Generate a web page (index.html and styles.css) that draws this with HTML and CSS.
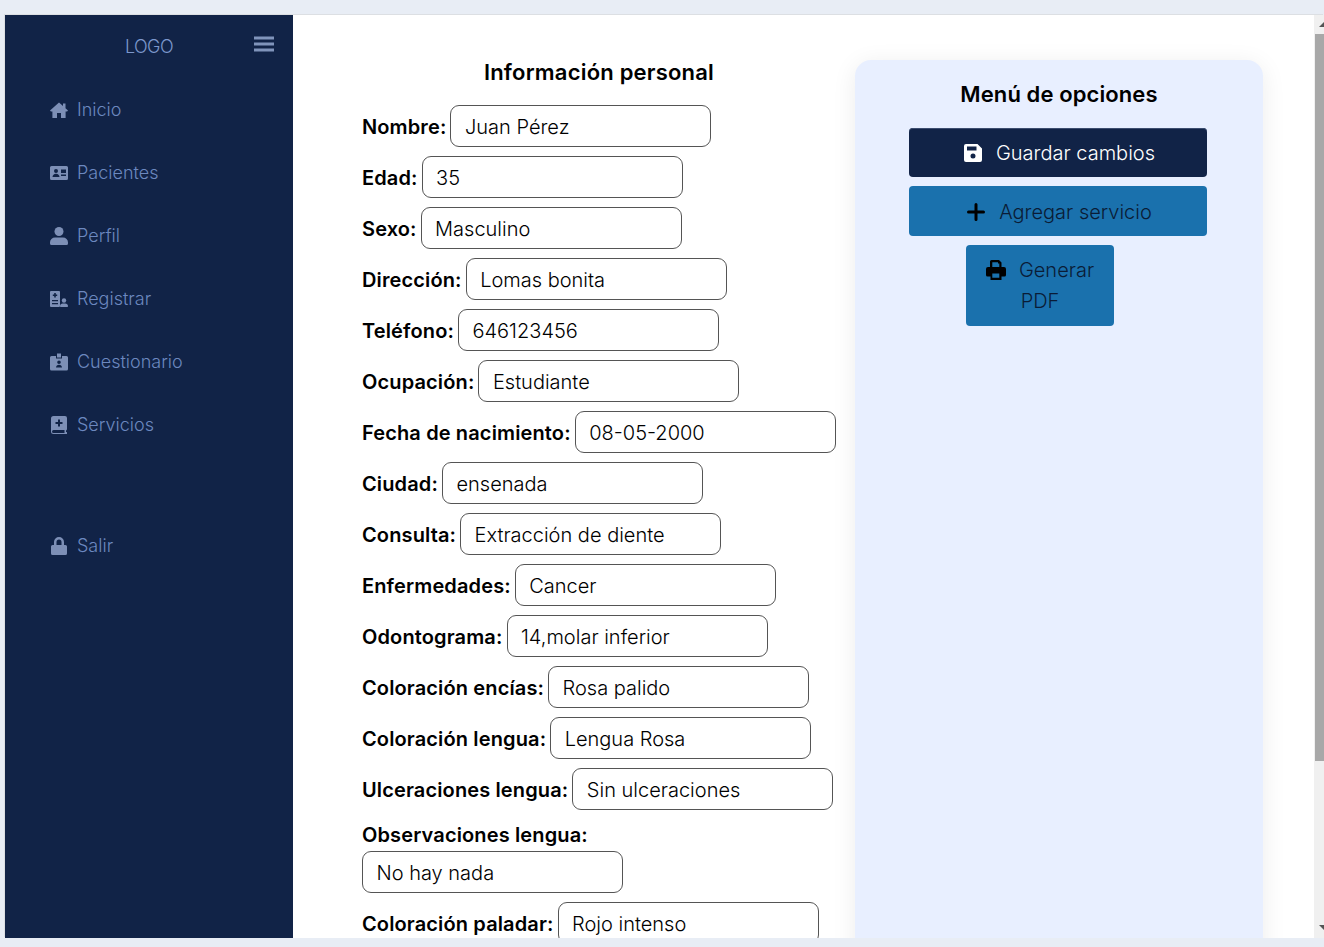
FILE: index.html
```html
<!DOCTYPE html>
<html lang="es">
<head>
<meta charset="utf-8">
<title>Información personal</title>
<link rel="stylesheet" href="styles.css">
</head>
<body>
<div class="app">
  <aside class="sidebar">
    <div class="brand">
      <span class="logo">LOGO</span>
      <svg class="burger" viewBox="0 0 20 18"><path d="M0 1.500h20v3H0zM0 7.500h20v3H0zM0 13.500h20v3H0z"/></svg>
    </div>
    <nav class="nav">
      <a class="nav-item"><svg class="nav-icon" viewBox="0 0 18 16"><path d="M9 .5 13 4V1.500h2.500V6.200L18 8.400l-.9 1.100H15.600V16H11v-5H7v5H2.400V9.500H.9L0 8.400z"/></svg><span>Inicio</span></a>
      <a class="nav-item"><svg class="nav-icon" viewBox="0 0 18 14"><path fill-rule="evenodd" d="M1.500 0h15A1.500 1.500 0 0 1 18 1.500v11a1.500 1.500 0 0 1-1.500 1.500h-15A1.500 1.500 0 0 1 0 12.500v-11A1.500 1.500 0 0 1 1.500 0zM6 3a2 2 0 1 0 0 4 2 2 0 0 0 0-4zM2.500 11h7c0-2-1.500-3.300-3.500-3.300S2.500 9 2.500 11zM11 3.500V7h5V3.500zM11 8.500V10h5V8.500z"/></svg><span>Pacientes</span></a>
      <a class="nav-item"><svg class="nav-icon" viewBox="0 0 18 18"><circle cx="9" cy="4.500" r="4.500"/><path d="M5 10.500h8a5 5 0 0 1 5 5V16.500a1.500 1.500 0 0 1-1.500 1.500h-15A1.500 1.500 0 0 1 0 16.500v-1a5 5 0 0 1 5-5z"/></svg><span>Perfil</span></a>
      <a class="nav-item"><svg class="nav-icon" viewBox="0 0 18 16"><path fill-rule="evenodd" d="M1 0h8a1 1 0 0 1 1 1v14a1 1 0 0 1-1 1H1a1 1 0 0 1-1-1V1a1 1 0 0 1 1-1zM4.200 2v1.500H2.800V5h1.400v1.500h1.600V5h1.400V3.500H5.800V2zM2 9v1.300h6V9zM2 12v1.300h6V12z"/><circle cx="14" cy="9.500" r="2.200"/><path d="M11 16c-.6 0-1-.4-1-1 0-1.500 1.300-2.600 2.700-2.600h2.600c1.400 0 2.700 1.100 2.700 2.600 0 .6-.4 1-1 1z"/></svg><span>Registrar</span></a>
      <a class="nav-item"><svg class="nav-icon" viewBox="0 0 18 17"><path fill-rule="evenodd" d="M7 0h4v4H7zM1.500 2.500H6V5h6V2.500h4.500A1.500 1.500 0 0 1 18 4v11.500a1.500 1.500 0 0 1-1.500 1.500h-15A1.500 1.500 0 0 1 0 15.500V4a1.500 1.500 0 0 1 1.500-1.500zM9 7a1.800 1.800 0 1 0 0 3.600A1.800 1.800 0 0 0 9 7zM6 14h6c0-1.500-1.300-2.700-3-2.700S6 12.500 6 14z"/></svg><span>Cuestionario</span></a>
      <a class="nav-item"><svg class="nav-icon" viewBox="0 0 16 18"><path fill-rule="evenodd" d="M2.500 0H14a2 2 0 0 1 2 2v11c0 .7-.4 1.300-1 1.600V16h.5a.5.5 0 0 1 .5.500V18H2.500A2.500 2.500 0 0 1 0 15.500v-13A2.500 2.500 0 0 1 2.500 0zM7 3.500V6H4.500v2H7v2.500h2V8h2.500V6H9V3.500zM2.500 14a1.500 1.500 0 0 0 0 3H13.500v-3z"/></svg><span>Servicios</span></a>
      <a class="nav-item exit"><svg class="nav-icon" viewBox="0 0 16 18"><path fill-rule="evenodd" d="M3 8V5a5 5 0 0 1 10 0v3h1.500A1.500 1.500 0 0 1 16 9.500v7a1.500 1.500 0 0 1-1.500 1.500h-13A1.500 1.500 0 0 1 0 16.500v-7A1.500 1.500 0 0 1 1.500 8zM5.500 8h5V5a2.500 2.500 0 0 0-5 0z"/></svg><span>Salir</span></a>
    </nav>
  </aside>
  <main class="content">
    <section class="info">
      <h2 class="info-title">Información personal</h2>
      <div class="field"><label>Nombre:</label><div class="box">Juan Pérez</div></div>
      <div class="field"><label>Edad:</label><div class="box">35</div></div>
      <div class="field"><label>Sexo:</label><div class="box">Masculino</div></div>
      <div class="field"><label>Dirección:</label><div class="box">Lomas bonita</div></div>
      <div class="field"><label>Teléfono:</label><div class="box">646123456</div></div>
      <div class="field"><label>Ocupación:</label><div class="box">Estudiante</div></div>
      <div class="field"><label>Fecha de nacimiento:</label><div class="box">08-05-2000</div></div>
      <div class="field"><label>Ciudad:</label><div class="box">ensenada</div></div>
      <div class="field"><label>Consulta:</label><div class="box">Extracción de diente</div></div>
      <div class="field"><label>Enfermedades:</label><div class="box">Cancer</div></div>
      <div class="field"><label>Odontograma:</label><div class="box">14,molar inferior</div></div>
      <div class="field"><label>Coloración encías:</label><div class="box">Rosa palido</div></div>
      <div class="field"><label>Coloración lengua:</label><div class="box">Lengua Rosa</div></div>
      <div class="field"><label>Ulceraciones lengua:</label><div class="box">Sin ulceraciones</div></div>
      <div class="field stacked"><label>Observaciones lengua:</label><div class="box">No hay nada</div></div>
      <div class="field"><label>Coloración paladar:</label><div class="box">Rojo intenso</div></div>
    </section>
    <section class="panel">
      <h2 class="panel-title">Menú de opciones</h2>
      <div class="actions">
        <button class="btn dark"><svg class="btn-icon" viewBox="0 0 18 18"><path fill="#fff" fill-rule="evenodd" d="M2 0h11.500L18 4.500V16a2 2 0 0 1-2 2H2a2 2 0 0 1-2-2V2a2 2 0 0 1 2-2zM3 2.500V6.500h9.500V2.500zM9 9.500a2.500 2.500 0 1 0 0 5 2.500 2.500 0 0 0 0-5z"/></svg><span>Guardar cambios</span></button>
        <button class="btn blue"><svg class="btn-icon" viewBox="0 0 18 18"><path d="M7.500 1.500a1.500 1.500 0 0 1 3 0V7.500h6a1.500 1.500 0 0 1 0 3h-6v6a1.500 1.500 0 0 1-3 0v-6h-6a1.500 1.500 0 0 1 0-3h6z"/></svg><span>Agregar servicio</span></button>
        <button class="btn blue narrow"><svg class="btn-icon print" viewBox="0 0 20 20"><path fill-rule="evenodd" d="M5.500 0H13l2.500 2.500V7H18a2 2 0 0 1 2 2v6a1.500 1.500 0 0 1-1.500 1.500h-3V20h-11v-3.500h-3A1.500 1.500 0 0 1 0 15V9a2 2 0 0 1 2-2h2V1.500A1.500 1.500 0 0 1 5.500 0zM6.300 2.200V7h7V3.500h-1.300V2.200zM6.300 13.500v4.300h7v-4.300z"/></svg><span>Generar PDF</span></button>
      </div>
    </section>
  </main>
  <div class="scrollbar">
    <div class="arrow up"></div>
    <div class="thumb"></div>
    <div class="arrow down"></div>
  </div>
</div>
</body>
</html>
```
FILE: styles.css
```css
* { box-sizing: border-box; }
html, body { margin: 0; height: 100%; overflow: hidden; }
body {
  background: #e8edf5;
  padding: 15px 0 9px 5px;
  font-family: Inter, "Liberation Sans", sans-serif;
  color: #000;
}
.app { display: flex; height: 100%; background: #fff; overflow: hidden; box-shadow: -1px -1px 0 #dcdfe3; }
.sidebar { width: 288px; flex: none; background: #112347; }
.brand { display: flex; align-items: center; height: 62px; }
.logo { margin-left: 120px; width: 50px; font-size: 18px; font-weight: 300; letter-spacing: -0.6px; color: #7c97cc; padding-top: 1px; }
.burger { width: 20px; height: 18px; margin-left: 79px; margin-top: -4px; fill: #8094bb; }
.nav { display: flex; flex-direction: column; padding-top: 1px; }
.nav-item { display: flex; align-items: center; height: 63px; padding-left: 45px; font-size: 18px; font-weight: 300; color: #6c88bf; }
.nav-icon { width: 18px; height: 18px; margin-right: 9px; fill: #7d8fb6; flex: none; }
.exit { margin-top: 58px; }
.content { flex: 1; display: flex; align-items: flex-start; min-width: 0; }
.info { width: 562px; flex: none; padding: 44px 0 0 69px; }
.info-title { margin: 0 0 20px; font-size: 22px; line-height: 26px; font-weight: 600; letter-spacing: 0.2px; text-align: center; width: 474px; }
.field { display: flex; align-items: center; gap: 4px; height: 42px; margin-bottom: 9px; }
.field label { font-size: 20px; font-weight: 600; letter-spacing: 0.13px; padding-top: 2px; white-space: nowrap; }
.box { width: 261px; height: 42px; flex: none; border: 1px solid #555; border-radius: 9px; padding-left: 13.5px; font-size: 20px; font-weight: 300; line-height: 42px; }
.stacked { display: block; height: auto; padding-top: 4px; }
.field.stacked label { display: block; line-height: 24px; padding-top: 0; margin-bottom: 4px; }
.panel { width: 408px; height: 1000px; margin-top: 45px; flex: none; background: #e8efff; border-radius: 16px; box-shadow: 0 4px 24px rgba(0,0,0,.08); padding-top: 20px; }
.panel-title { margin: 0 0 19.5px; font-size: 22px; line-height: 28px; font-weight: 600; letter-spacing: 0.1px; text-align: center; }
.actions { display: flex; flex-direction: column; align-items: flex-start; gap: 9.25px; padding-left: 54px; }
.btn { display: flex; align-items: center; justify-content: center; width: 298px; height: 49.5px; border: 0; border-radius: 4px; padding: 2px 0 0 3px; font: 300 20px/31px Inter, "Liberation Sans", sans-serif; }
.btn-icon { width: 18px; height: 18px; margin-right: 14px; flex: none; }
.dark { background: #112347; color: #fff; box-shadow: inset 0 1px 0 #3c4d70; }
.blue { background: #1a71ad; color: #0a1c36; }
.narrow { display: block; width: 148px; height: 81px; margin-left: 57px; padding: 0 10px; text-align: center; }
.print { display: inline-block; width: 20px; height: 20px; margin-right: 13px; vertical-align: -3px; }
.scrollbar { width: 10px; flex: none; background: #f0f0f0; padding-left: 1px; display: flex; flex-direction: column; }
.thumb { flex: none; height: 727px; margin-top: 7px; background: #a8a8a8; }
.arrow { flex: none; width: 0; height: 0; margin-left: 4px; border-left: 5px solid transparent; }
.up { margin-top: 7px; border-bottom: 5px solid #555; }
.down { margin-top: auto; margin-bottom: 8px; border-top: 5px solid #555; }
```
